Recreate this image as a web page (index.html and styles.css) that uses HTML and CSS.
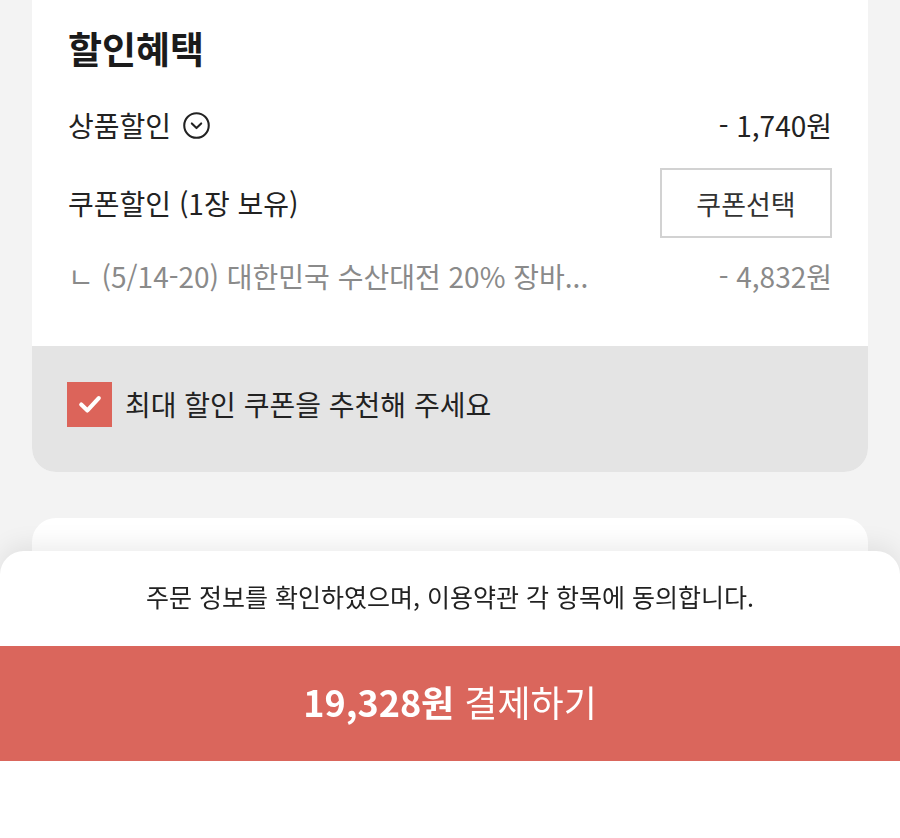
FILE: index.html
```html
<!DOCTYPE html>
<html lang="ko">
<head>
  <meta charset="utf-8">
  <title>할인혜택</title>
  <link rel="stylesheet" href="styles.css">
</head>
<body>
  <div class="page">
    <div class="card">
      <div class="cardBody">
        <h2 class="title">할인혜택</h2>

        <div class="row rowProduct">
          <span class="label">상품할인
            <svg class="chevron" width="27" height="27" viewBox="0 0 26 26">
              <circle cx="13" cy="13" r="11.8" fill="none" stroke="#222" stroke-width="2"/>
              <path d="M8.5 11 L13 15.5 L17.5 11" fill="none" stroke="#222" stroke-width="2" stroke-linecap="round" stroke-linejoin="round"/>
            </svg>
          </span>
          <span class="amount">- 1,740원</span>
        </div>

        <div class="row rowCoupon">
          <span class="label">쿠폰할인 (1장 보유)</span>
          <button class="couponButton">쿠폰선택</button>
        </div>

        <div class="row rowSub">
          <span class="label">ㄴ (5/14-20) 대한민국 수산대전 20% 장바...</span>
          <span class="amount">- 4,832원</span>
        </div>
      </div>

      <div class="recommend">
        <span class="checkbox">
          <svg width="28" height="28" viewBox="0 0 24 24">
            <path d="M4.5 12.5 L9.8 17.5 L19.5 7" fill="none" stroke="#fff" stroke-width="3.6" stroke-linecap="round" stroke-linejoin="round"/>
          </svg>
        </span>
        <span class="recommendText">최대 할인 쿠폰을 추천해 주세요</span>
      </div>
    </div>

    <div class="card nextCard"></div>
  </div>

  <div class="sheet">
    <p class="agree">주문 정보를 확인하였으며, 이용약관 각 항목에 동의합니다.</p>
    <button class="payButton"><b>19,328원</b> 결제하기</button>
  </div>
</body>
</html>
```

FILE: styles.css
```css
*{
  margin: 0;
  padding: 0;
  box-sizing: border-box;
}

body{
  background-color: #f3f3f3;
  font-family: "Noto Sans CJK KR", "Noto Sans", sans-serif;
  color: #222;
  height: 838px;
  overflow: hidden;
}

.page{
  padding: 0 32px;
}

.card{
  background-color: #fff;
  border-radius: 0 0 24px 24px;
  overflow: hidden;
}

.cardBody{
  padding: 24px 36px 50px 36px;
}

.title{
  font-size: 37px;
  font-weight: bold;
  line-height: 48px;
  color: #1b1b1b;
}

.row{
  display: flex;
  justify-content: space-between;
  align-items: center;
  font-size: 28px;
  line-height: 40px;
}

.label{
  display: flex;
  align-items: center;
}

.chevron{
  margin-left: 12px;
}

.rowProduct{
  margin-top: 33px;
}

.rowCoupon{
  margin-top: 23px;
  height: 70px;
}

.couponButton{
  width: 172px;
  height: 70px;
  background: #fff;
  border: 2px solid #d2d2d2;
  font-family: inherit;
  font-size: 27px;
  color: #333;
}

.rowSub{
  margin-top: 18px;
  color: #8a8a8a;
}

.recommend{
  background-color: #e4e4e4;
  height: 126px;
  display: flex;
  align-items: center;
  padding-left: 35px;
  padding-bottom: 10px;
}

.checkbox{
  width: 45px;
  height: 45px;
  background-color: #dc645a;
  display: flex;
  align-items: center;
  justify-content: center;
}

.recommendText{
  margin-left: 13px;
  font-size: 28px;
  color: #222;
}

.nextCard{
  margin-top: 46px;
  height: 200px;
  border-radius: 24px 24px 0 0;
}

.sheet{
  position: fixed;
  left: 0;
  right: 0;
  bottom: 0;
  height: 287px;
  background-color: #fff;
  border-radius: 24px 24px 0 0;
  box-shadow: 0 -6px 24px rgba(0,0,0,0.08);
}

.agree{
  text-align: center;
  font-size: 25px;
  line-height: 34px;
  padding-top: 28px;
  color: #222;
}

.payButton{
  display: block;
  width: 100%;
  height: 115px;
  margin-top: 33px;
  border: none;
  background-color: #da665c;
  color: #fff;
  font-family: inherit;
  font-size: 36px;
  padding-bottom: 6px;
}

.payButton b{
  font-weight: bold;
}
```
